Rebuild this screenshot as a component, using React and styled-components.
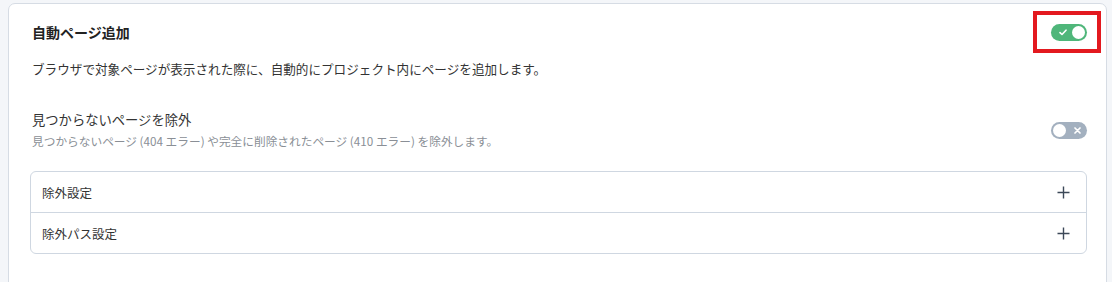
import React, { useState } from "react";
import styled, { createGlobalStyle } from "styled-components";

const GlobalStyle = createGlobalStyle`
  html, body {
    margin: 0;
    padding: 0;
    background: #f4f6f9;
    font-family: "Noto Sans CJK JP", "Noto Sans", "Liberation Sans", sans-serif;
    color: #333;
  }
`;

const Page = styled.div`
  padding: 3px 5px 0 8px;
  height: 282px;
  box-sizing: border-box;
  overflow: hidden;
`;

const Card = styled.div`
  position: relative;
  background: #fff;
  border: 1px solid #d6dce4;
  border-radius: 7px;
  padding: 17px 19px 40px 21px;
  min-height: 300px;
  box-sizing: border-box;
`;

const HeaderRow = styled.div`
  display: flex;
  align-items: center;
  justify-content: space-between;
  height: 22px;
`;

const Title = styled.h2`
  margin: 0 0 0 2px;
  font-size: 14px;
  font-weight: 700;
  color: #222;
`;

const Description = styled.p`
  margin: 16px 0 0 2px;
  font-size: 12.6px;
  line-height: 20px;
  color: #333;
`;

const OptionRow = styled.div`
  display: flex;
  align-items: center;
  justify-content: space-between;
  margin-top: 31px;
`;

const OptionText = styled.div`
  margin-left: 2px;
`;

const OptionTitle = styled.div`
  font-size: 13.3px;
  line-height: 20px;
  color: #333;
`;

const OptionSub = styled.div`
  margin-top: 1px;
  font-size: 11.7px;
  line-height: 20px;
  color: #8a8f96;
`;

const Track = styled.button`
  position: relative;
  width: 36px;
  height: 17px;
  padding: 0;
  border: none;
  border-radius: 9px;
  background: ${(p) => (p.$on ? "#4fb67a" : "#a3b0bf")};
  cursor: pointer;
  flex-shrink: 0;
`;

const Knob = styled.span`
  position: absolute;
  top: 2px;
  left: ${(p) => (p.$on ? "21px" : "2px")};
  width: 13px;
  height: 13px;
  border-radius: 50%;
  background: #fff;
`;

const Mark = styled.svg`
  position: absolute;
  top: 5px;
  left: ${(p) => (p.$on ? "8px" : "23px")};
`;

const Highlight = styled.div`
  position: absolute;
  top: 7px;
  right: 5px;
  width: 68px;
  height: 42px;
  border: 4px solid #e3191f;
  box-sizing: border-box;
  pointer-events: none;
`;

const Accordion = styled.div`
  margin-top: 20px;
  border: 1px solid #cfd7e1;
  border-radius: 6px;
`;

const AccordionItem = styled.div`
  display: flex;
  align-items: center;
  justify-content: space-between;
  height: 40px;
  padding: 0 16px 0 11px;
  font-size: 12.5px;
  color: #333;
  & + & {
    border-top: 1px solid #cfd7e1;
  }
`;

const Toggle = ({ on, onClick }) => (
  <Track $on={on} onClick={onClick}>
    <Knob $on={on} />
    {on ? (
      <Mark $on width="8" height="7" viewBox="0 0 8 7">
        <path d="M1 3.6 L3 5.5 L7 1.2" fill="none" stroke="#fff" strokeWidth="1.6" strokeLinecap="round" strokeLinejoin="round" />
      </Mark>
    ) : (
      <Mark width="7" height="7" viewBox="0 0 7 7">
        <path d="M1 1 L6 6 M6 1 L1 6" fill="none" stroke="#fff" strokeWidth="1.7" strokeLinecap="round" />
      </Mark>
    )}
  </Track>
);

const Plus = () => (
  <svg width="13" height="13" viewBox="0 0 13 13">
    <path d="M6.5 0.5 V12.5 M0.5 6.5 H12.5" stroke="#3c4858" strokeWidth="1.4" />
  </svg>
);

const App = () => {
  const [autoAdd, setAutoAdd] = useState(true);
  const [exclude, setExclude] = useState(false);

  return (
    <Page>
      <GlobalStyle />
      <Card>
        <HeaderRow>
          <Title>自動ページ追加</Title>
          <Toggle on={autoAdd} onClick={() => setAutoAdd(!autoAdd)} />
        </HeaderRow>
        <Highlight />
        <Description>
          ブラウザで対象ページが表示された際に、自動的にプロジェクト内にページを追加します。
        </Description>
        <OptionRow>
          <OptionText>
            <OptionTitle>見つからないページを除外</OptionTitle>
            <OptionSub>
              見つからないページ (404 エラー) や完全に削除されたページ (410 エラー) を除外します。
            </OptionSub>
          </OptionText>
          <Toggle on={exclude} onClick={() => setExclude(!exclude)} />
        </OptionRow>
        <Accordion>
          <AccordionItem>
            除外設定
            <Plus />
          </AccordionItem>
          <AccordionItem>
            除外パス設定
            <Plus />
          </AccordionItem>
        </Accordion>
      </Card>
    </Page>
  );
};

export default App;
